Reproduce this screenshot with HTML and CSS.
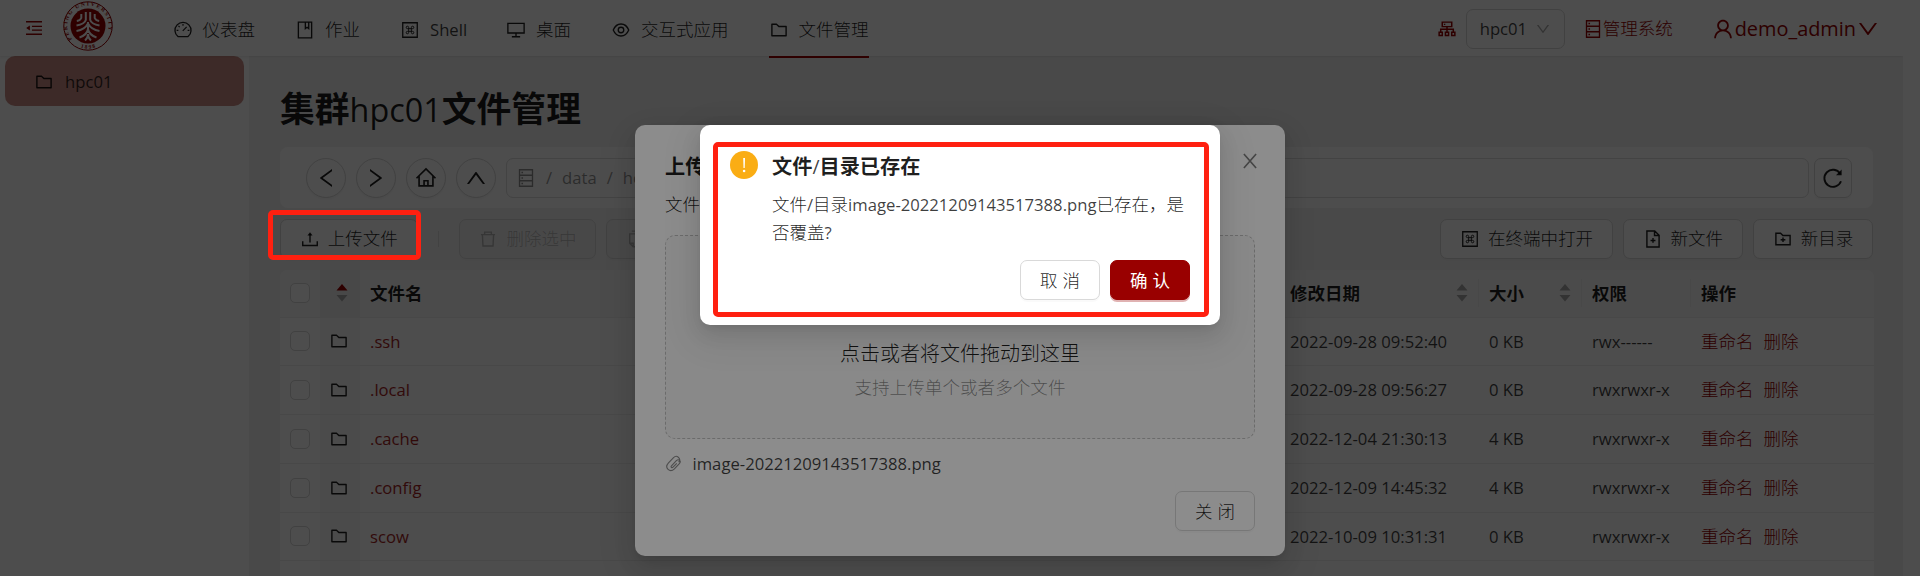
FILE: index.html
```html
<!DOCTYPE html>
<html lang="zh-CN">
<head>
<meta charset="utf-8">
<title>文件管理</title>
<link rel="stylesheet" href="styles.css">
</head>
<body>
<svg class="defs" aria-hidden="true">
  <symbol id="folder" viewBox="0 0 1024 1024"><path d="M880 298.4H521L403.7 186.2a8.15 8.15 0 00-5.5-2.2H144c-17.7 0-32 14.3-32 32v592c0 17.7 14.3 32 32 32h736c17.700 0 32-14.300 32-32V330.400c0-17.700-14.300-32-32-32zM840 768H184V256h188.500l119.600 114.400H840V768z"/></symbol>
  <symbol id="user" viewBox="0 0 1024 1024"><path d="M858.500 763.600a374 374 0 00-80.600-119.500 375.630 375.630 0 00-119.500-80.600c-.4-.2-.8-.3-1.200-.5C719.500 518 760 444.700 760 362c0-137-111-248-248-248S264 225 264 362c0 82.700 40.500 156 102.800 201.100-.4.2-.8.3-1.200.5-44.800 18.900-85 46-119.500 80.600a375.630 375.630 0 00-80.600 119.500A371.700 371.700 0 00136 901.800a8 8 0 008 8.200h60c4.400 0 7.900-3.500 8-7.800 2-77.200 33-149.500 87.800-204.300 56.700-56.700 132-87.900 212.200-87.900s155.500 31.200 212.200 87.900C779 752.700 810 825 812 902.200c.1 4.400 3.600 7.800 8 7.800h60a8 8 0 008-8.200c-1-47.800-10.900-94.300-29.500-138.200zM512 534c-45.900 0-89.100-17.900-121.600-50.400S340 407.900 340 362c0-45.900 17.900-89.100 50.400-121.600S466.100 190 512 190s89.100 17.900 121.600 50.400S684 316.100 684 362c0 45.900-17.900 89.100-50.400 121.600S557.900 534 512 534z"/></symbol>
  <symbol id="down" viewBox="0 0 1024 1024"><path d="M884 256h-75c-5.100 0-9.900 2.500-12.900 6.600L512 654.200 227.900 262.600c-3-4.100-7.800-6.600-12.900-6.600h-75c-6.500 0-10.300 7.400-6.500 12.700l352.600 486.100c12.800 17.600 39 17.600 51.700 0l352.600-486.100c3.900-5.300.1-12.700-6.400-12.700z"/></symbol>
  <symbol id="fold" viewBox="0 0 1024 1024"><path d="M104 158h816v72H104zM408 392h512v72H408zM408 584h512v72H408zM104 794h816v72H104zM300 380v264L112 512z"/></symbol>
  <symbol id="dash" viewBox="0 0 1024 1024"><g fill="none" stroke="currentColor" stroke-width="68"><path d="M254 850a410 410 0 1 1 516 0z" stroke-linejoin="round"/><path d="M512 210v90M185 530h90M750 530h90M280 300l62 62M500 560l200-205" stroke-width="60"/></g></symbol>
  <symbol id="book" viewBox="0 0 1024 1024"><path fill="none" stroke="currentColor" stroke-width="68" d="M172 110h680v804H172zM530 110v330l86-66 86 66V110"/></symbol>
  <symbol id="cmd" viewBox="0 0 1024 1024"><g fill="none" stroke="currentColor" stroke-width="66"><path d="M140 140h744v744H140z"/><path stroke-width="46" d="M442 442h140v140H442zM442 442H376a62 62 0 1 1 66-66zM582 442V376a62 62 0 1 1 66 66zM582 582h66a62 62 0 1 1-66 66zM442 582v66a62 62 0 1 1-66-66z"/></g></symbol>
  <symbol id="desktop" viewBox="0 0 1024 1024"><path fill="none" stroke="currentColor" stroke-width="68" d="M96 176h832v490H96zM512 666v184M300 856h424"/></symbol>
  <symbol id="eye" viewBox="0 0 1024 1024"><g fill="none" stroke="currentColor" stroke-width="68"><path d="M116 512Q245 204 512 204T908 512Q779 820 512 820T116 512z"/><circle cx="512" cy="512" r="142"/></g></symbol>
  <symbol id="cluster" viewBox="0 0 1024 1024"><path fill="none" stroke="currentColor" stroke-width="76" d="M270 160h484v230H270zM512 390v260M190 650V520h644v130M110 680h160v160H110zM432 680h160v160H432zM754 680h160v160H754zM355 275h70"/></symbol>
  <symbol id="db" viewBox="0 0 1024 1024"><g fill="none" stroke="currentColor" stroke-width="68"><path d="M180 90h664v844H180zM180 371h664M180 652h664"/><path d="M280 232h80M280 512h80M280 793h80"/></g></symbol>
  <symbol id="home" viewBox="0 0 1024 1024"><path fill="none" stroke="currentColor" stroke-width="76" d="M70 525L512 86l442 439M190 420v460h644V420M422 880V640h180v240"/></symbol>
  <symbol id="reload" viewBox="0 0 1024 1024"><path fill="none" stroke="currentColor" stroke-width="80" d="M818 330A365 365 0 1 0 852 650"/><path d="M880 150v245H640z"/></symbol>
  <symbol id="upload" viewBox="0 0 1024 1024"><path fill="none" stroke="currentColor" stroke-width="72" d="M140 626v220h744V626M512 690V250"/><path d="M512 160l130 170H382z"/></symbol>
  <symbol id="trash" viewBox="0 0 1024 1024"><path fill="none" stroke="currentColor" stroke-width="72" d="M150 290h724M225 290l30 580h514l30-580M340 290V160h344v130"/></symbol>
  <symbol id="copy" viewBox="0 0 1024 1024"><path fill="none" stroke="currentColor" stroke-width="72" d="M300 110h530v700M190 250h500v660H370L190 730zM370 910V730H190"/></symbol>
  <symbol id="newfile" viewBox="0 0 1024 1024"><path fill="none" stroke="currentColor" stroke-width="72" d="M200 100h400l224 224v600H200zM590 100v234h234M512 460v250M387 585h250"/></symbol>
  <symbol id="newdir" viewBox="0 0 1024 1024"><path fill="none" stroke="currentColor" stroke-width="72" d="M148 220h240l120 114h368v470H148zM512 430v240M392 550h240"/></symbol>
  <symbol id="clip" viewBox="0 0 1024 1024"><path fill="none" stroke="currentColor" stroke-width="66" d="M780 130c-90-80-200-60-280 25L205 460c-120 130-120 290-25 380s250 85 370-30l290-300c65-75 60-150 15-195s-125-45-190 20L380 630c-30 35-30 70-5 95s65 20 95-10l220-225M780 130c110 90 100 210 20 290"/></symbol>
  <symbol id="x" viewBox="0 0 1024 1024"><path fill="none" stroke="currentColor" stroke-width="84" d="M200 150l624 724M824 150L200 874"/></symbol>
  <symbol id="sort" viewBox="0 0 12 18"><path class="up" d="M6 0l5.500 6.500H.5z"/><path d="M6 17.500L.5 11h11z"/></symbol>
</svg>

<div class="page">
  <header class="header">
    <svg class="i fold red"><use href="#fold"/></svg>
    <svg class="logo" viewBox="0 0 50 50">
      <circle class="ring" cx="25" cy="25" r="24.200"/>
      <path id="arc-top" fill="none" d="M9 38.200A20.700 20.700 0 1 1 41 38.200"/>
      <path id="arc-bottom" fill="none" d="M9 41A22.600 22.600 0 0 0 41 41"/>
      <text textLength="83"><textPath href="#arc-top" textLength="83">PEKING UNIVERSITY</textPath></text>
      <text text-anchor="middle"><textPath href="#arc-bottom" startOffset="50%">1 8 9 8</textPath></text>
      <circle cx="25" cy="25" r="17.500"/>
      <path class="emblem" d="M22.800 11v8q-1 4-9.300 5.500M27.200 11v8q1 4 9.300 5.500M18.300 13v4q-1 2.500-4.500 3M31.700 13v4q1 2.500 4.500 3M25 21v10M25 22.500q-3 6-11.500 7.500M25 22.500q3 6 11.500 7.500M25 28q-1 6-8.500 8.500M25 28q1 6 8.500 8.500M25 33q0 4-3 6.500M25 33q0 4 3 6.500"/>
    </svg>
    <nav class="nav">
      <a><svg class="i"><use href="#dash"/></svg>仪表盘</a>
      <a><svg class="i"><use href="#book"/></svg>作业</a>
      <a class="shell"><svg class="i"><use href="#cmd"/></svg><span class="l">Shell</span></a>
      <a><svg class="i"><use href="#desktop"/></svg>桌面</a>
      <a><svg class="i"><use href="#eye"/></svg>交互式应用</a>
      <a class="on"><svg class="i"><use href="#folder"/></svg>文件管理</a>
    </nav>
    <div class="tools">
      <svg class="i red"><use href="#cluster"/></svg>
      <div class="select"><span class="l">hpc01</span><svg><use href="#down"/></svg></div>
      <a class="manage"><svg class="i"><use href="#db"/></svg>管理系统</a>
      <a class="account"><svg class="i"><use href="#user"/></svg><span>demo_admin</span><svg class="i"><use href="#down"/></svg></a>
    </div>
  </header>
  <div class="body">
    <aside class="side"><a class="item"><svg class="i"><use href="#folder"/></svg><span class="l">hpc01</span></a></aside>
    <main class="main">
      <h1>集群<span class="l">hpc01</span>文件管理</h1>
      <div class="pathbar">
        <button class="round"><svg class="turn-left"><use href="#down"/></svg></button>
        <button class="round"><svg class="turn-right"><use href="#down"/></svg></button>
        <button class="round"><svg class="home"><use href="#home"/></svg></button>
        <button class="round"><svg class="turn-up"><use href="#down"/></svg></button>
        <div class="crumbs l"><svg class="i"><use href="#db"/></svg><span>/</span><span>data</span><span>/</span><span>home</span></div>
        <button class="refresh"><svg><use href="#reload"/></svg></button>
      </div>
      <div class="actions">
        <button class="btn upload"><svg class="i"><use href="#upload"/></svg>上传文件</button>
        <i class="rule"></i>
        <button class="btn off"><svg class="i"><use href="#trash"/></svg>删除选中</button>
        <button class="btn off"><svg class="i"><use href="#copy"/></svg>复制选中</button>
        <span class="grow"></span>
        <button class="btn"><svg class="i"><use href="#cmd"/></svg>在终端中打开</button>
        <button class="btn"><svg class="i"><use href="#newfile"/></svg>新文件</button>
        <button class="btn"><svg class="i"><use href="#newdir"/></svg>新目录</button>
      </div>
      <div class="table">
        <div class="row head"><div><i class="box"></i></div><div class="kind"><svg class="sort asc"><use href="#sort"/></svg></div><div>文件名</div><div class="sep">修改日期<svg class="sort"><use href="#sort"/></svg></div><div class="sep">大小<svg class="sort"><use href="#sort"/></svg></div><div class="sep">权限</div><div>操作</div></div>
        <div class="row"><div><i class="box"></i></div><div class="kind"><svg class="i"><use href="#folder"/></svg></div><div class="name l">.ssh</div><div class="l">2022-09-28 09:52:40</div><div class="l">0 KB</div><div class="l">rwx------</div><div class="ops"><a>重命名</a><a>删除</a></div></div>
        <div class="row"><div><i class="box"></i></div><div class="kind"><svg class="i"><use href="#folder"/></svg></div><div class="name l">.local</div><div class="l">2022-09-28 09:56:27</div><div class="l">0 KB</div><div class="l">rwxrwxr-x</div><div class="ops"><a>重命名</a><a>删除</a></div></div>
        <div class="row"><div><i class="box"></i></div><div class="kind"><svg class="i"><use href="#folder"/></svg></div><div class="name l">.cache</div><div class="l">2022-12-04 21:30:13</div><div class="l">4 KB</div><div class="l">rwxrwxr-x</div><div class="ops"><a>重命名</a><a>删除</a></div></div>
        <div class="row"><div><i class="box"></i></div><div class="kind"><svg class="i"><use href="#folder"/></svg></div><div class="name l">.config</div><div class="l">2022-12-09 14:45:32</div><div class="l">4 KB</div><div class="l">rwxrwxr-x</div><div class="ops"><a>重命名</a><a>删除</a></div></div>
        <div class="row"><div><i class="box"></i></div><div class="kind"><svg class="i"><use href="#folder"/></svg></div><div class="name l">scow</div><div class="l">2022-10-09 10:31:31</div><div class="l">0 KB</div><div class="l">rwxrwxr-x</div><div class="ops"><a>重命名</a><a>删除</a></div></div>
        <div class="row"><div></div><div class="kind"></div></div>
      </div>
    </main>
  </div>
</div>

<div class="mask">
  <section class="modal">
    <div class="modal-head"><h2>上传文件</h2><svg><use href="#x"/></svg></div>
    <p class="tip">文件</p>
    <div class="drop"><p>点击或者将文件拖动到这里</p><p class="hint">支持上传单个或者多个文件</p></div>
    <div class="file"><svg class="clip"><use href="#clip"/></svg><span class="l">image-20221209143517388.png</span></div>
    <div class="foot"><button class="btn wide">关闭</button></div>
  </section>
</div>

<div class="mask">
  <section class="confirm">
    <div class="frame">
      <svg class="warn" viewBox="0 0 28 28"><circle cx="14" cy="14" r="14"/><path d="M13.200 7h1.800l-.3 10h-1.200z"/><circle class="dot" cx="14.100" cy="20" r="1.300"/></svg>
      <div class="text">
        <h2>文件<span class="l">/</span>目录已存在</h2>
        <p>文件<span class="l">/</span>目录<span class="l">image-20221209143517388.png</span>已存在，是<br>否覆盖<span class="l">?</span></p>
        <div class="foot"><button class="btn wide">取消</button><button class="btn wide primary">确认</button></div>
      </div>
    </div>
  </section>
</div>
<div class="highlight"></div>
</body>
</html>
```
FILE: styles.css
```css
* { box-sizing: border-box; margin: 0; }
body {
  width: 1920px; height: 576px; overflow: hidden; position: relative; background: #fff;
  font: 300 17.5px/27.5px "Open Sans", "Noto Sans CJK SC", sans-serif; color: rgba(0, 0, 0, .88);
}
svg { fill: currentColor; display: block; flex: none; }
.defs { position: absolute; width: 0; height: 0; }
.i { width: 20px; height: 20px; }
.l { font-size: .953em; font-weight: 400; opacity: .86; }
.red, .manage, .account { color: #900; }
button { font: inherit; color: inherit; padding: 0; }

.page { width: 1903px; height: 576px; overflow: hidden; display: flex; flex-direction: column; isolation: isolate; }
.header { height: 56px; flex: none; display: flex; align-items: center; background: #fff; box-shadow: 0 1px 2px rgba(0, 0, 0, .08); position: relative; z-index: 1; }
.fold { margin: 0 19px 0 24px; }
.logo { width: 50px; height: 50px; color: #900; margin-bottom: 4px; }
.logo text { font: 700 5.5px "Liberation Serif", serif; }
.ring { fill: none; stroke: currentColor; }
.emblem { fill: none; stroke: #fff; stroke-width: 2; }
.nav { display: flex; gap: 40px; height: 58px; margin: 2px 0 0 59.5px; }
.nav a { display: flex; align-items: center; gap: 10px; padding-top: 3px; border-bottom: 2px solid transparent; }
.nav .shell { width: 66px; }
.nav .on { border-color: #900; }
.tools { margin-left: auto; display: flex; align-items: center; padding-top: 1px; }
.select { display: flex; align-items: center; justify-content: space-between; width: 99px; height: 40px; margin: 0 18px 0 9px; padding: 0 13px; border: 1px solid #d9d9d9; border-radius: 7px; }
.select svg { width: 16px; height: 16px; color: #aaa; }
.manage { display: flex; align-items: center; margin-right: 38px; }
.account { display: flex; align-items: center; font-size: 19.9px; font-weight: 400; margin-right: 23px; }
.account .i { width: 24px; height: 24px; }

.body { flex: 1; display: flex; }
.side { width: 249px; padding: 0 5px; background: #fff; }
.item { display: flex; align-items: center; gap: 11px; height: 50px; padding: 1px 0 0 29px; border-radius: 10px; background: #cc8f87; }
.main { flex: 1; background: #f5f5f5; padding: 31px 30px 0 31px; }
h1 { font-size: 34.8px; line-height: 44px; font-weight: 700; margin-bottom: 16px; }
h1 .l { font-weight: 500; font-size: .93em; line-height: 1; opacity: 1; }
.pathbar { display: flex; align-items: center; gap: 10px; height: 61px; padding: 0 21px 0 26px; background: #fff; border-radius: 8px; }
.round, .refresh { width: 40px; height: 40px; background: #fff; border: 1px solid #d9d9d9; border-radius: 50%; display: grid; place-items: center; box-shadow: 0 2px 0 rgba(0, 0, 0, .02); }
.round svg, .refresh svg { width: 24px; height: 24px; }
.round .home { width: 22px; height: 22px; }
.turn-left { transform: rotate(90deg); }
.turn-right { transform: rotate(-90deg); }
.turn-up { transform: rotate(180deg); }
.crumbs { flex: 1; display: flex; align-items: center; gap: 10px; height: 40px; padding-left: 9px; border: 1px solid #d9d9d9; border-radius: 7px; color: rgba(0, 0, 0, .5); }
.refresh { width: 38px; border-radius: 7px; margin-left: -5px; }
.actions { display: flex; align-items: center; gap: 10px; margin: 11px 0; }
.btn { display: flex; align-items: center; justify-content: center; gap: 8px; height: 40px; padding: 0 18.8px; border: 1px solid #d9d9d9; border-radius: 7px; background: #fff; box-shadow: 0 2px 0 rgba(0, 0, 0, .02); white-space: nowrap; }
.off { color: rgba(0, 0, 0, .25); background: #f0f0f0; }
.rule { width: 1px; height: 16px; margin: 0 10px; background: #ddd; }
.grow { flex: 1; }

.table { margin-right: -1px; background: #fff; border-radius: 8px 8px 0 0; }
.row { display: grid; grid-template-columns: 40px 40px 920px 199px 103px 109px 1fr; height: 48.75px; border-bottom: 1px solid #f0f0f0; }
.row > div { display: flex; align-items: center; padding: 0 10px; position: relative; }
.head { height: 47.5px; font-weight: 700; background: #fafafa; border-radius: 8px 8px 0 0; }
.row > .kind { background: #fafafa; padding-left: 9px; }
.head > .kind { background: #f0f0f0; }
.box { width: 20px; height: 20px; border: 1px solid #d9d9d9; border-radius: 5px; background: #fff; }
.sort { width: 12px; height: 18px; margin-left: auto; color: #aaa; }
.head .kind .sort { margin: 0 auto 0 7px; }
.asc { --up: #900; }
.up { fill: var(--up, currentColor); }
.sep { border-right: 1px solid #f0f0f0; height: 28px; align-self: center; }
.name, .ops { color: #900; }
.ops { gap: 10px; }

.mask { position: absolute; inset: 0; padding-top: 125px; background: rgba(0, 0, 0, .45); }
.modal, .confirm { margin: 0 auto; background: #fff; border-radius: 10px; box-shadow: 0 8px 20px rgba(0, 0, 0, .1), 0 4px 8px -5px rgba(0, 0, 0, .12), 0 11px 35px 10px rgba(0, 0, 0, .06); }
.modal { width: 650px; height: 431px; padding: 26px 30px; }
.modal-head { display: flex; justify-content: space-between; height: 40px; }
.modal-head svg { width: 20px; height: 20px; margin: 0 -5px 0 0; color: rgba(0, 0, 0, .5); }
h2 { font-size: 20.2px; font-weight: 700; line-height: 30px; }
.tip { height: 44px; }
.drop { height: 204px; padding-top: 103px; text-align: center; border: 1px dashed #c4c4c4; border-radius: 10px; background: #fafafa; font-size: 20px; line-height: 30px; }
.drop .hint { font-size: 17.6px; margin-top: 3px; color: rgba(0, 0, 0, .45); }
.file { display: flex; align-items: center; gap: 10px; height: 50px; }
.clip { width: 17.5px; height: 17.5px; color: rgba(0, 0, 0, .45); }
.foot { display: flex; justify-content: flex-end; gap: 10px; }
.modal .foot { margin-top: 2px; }
.wide { width: 80px; padding: 1px 0 0; letter-spacing: 5px; text-indent: 5px; }
.primary { background: #900; border-color: #900; color: #fff; font-weight: 400; box-shadow: 0 2px 0 rgba(153, 0, 0, .3); }
.confirm { width: 520px; height: 200px; padding: 17px 11px 0 13px; }
.frame { display: flex; gap: 15px; height: 175px; padding: 4px 14px 0 12px; border: 5px solid #ff2010; border-radius: 5px; }
.warn { width: 28px; height: 28px; fill: #faad14; }
.warn path, .warn .dot { fill: #fff; }
.text { flex: 1; white-space: nowrap; }
.confirm h2 { height: 32px; margin: 0 0 8px -1px; }
.confirm p { height: 55px; margin-left: -1px; }
.confirm p .l, .confirm h2 .l { line-height: 1; }
.confirm .foot { margin-top: 14px; }
.highlight { position: absolute; left: 268px; top: 210px; width: 153px; height: 50px; border: 5px solid #ff2010; border-radius: 5px; }
```
